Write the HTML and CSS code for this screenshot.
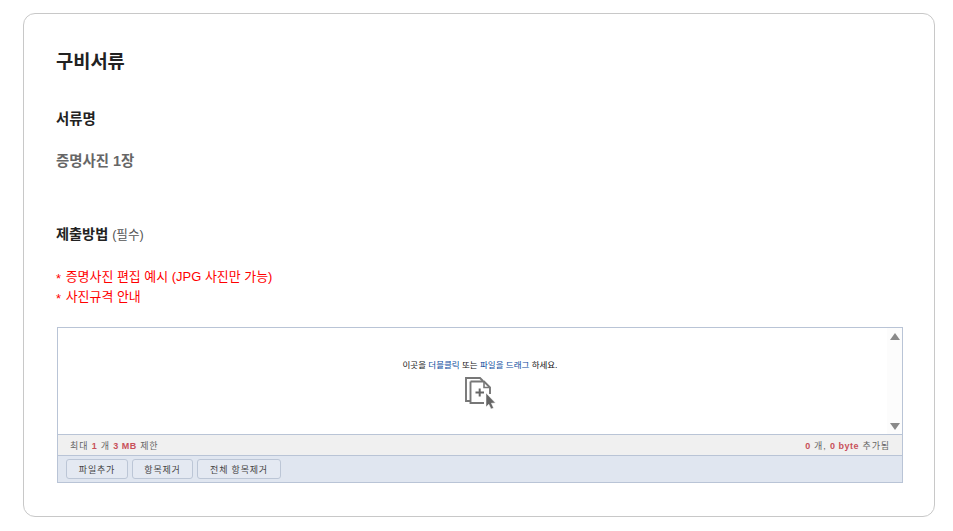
FILE: index.html
```html
<!DOCTYPE html>
<html lang="ko">
<head>
<meta charset="utf-8">
<title>구비서류</title>
<link rel="stylesheet" href="styles.css">
</head>
<body>
<section class="card">
  <h2 class="title">구비서류</h2>
  <h3 class="label label-name">서류명</h3>
  <p class="doc-name">증명사진 1장</p>
  <h3 class="label label-method">제출방법 <span class="req">(필수)</span></h3>
  <ul class="notes">
    <li><span class="star">*</span> 증명사진 편집 예시 (JPG 사진만 가능)</li>
    <li><span class="star">*</span> 사진규격 안내</li>
  </ul>
  <div class="uploader">
    <div class="drop">
      <div class="drop-center">
        <p class="hint">이곳을 <span class="blue">더블클릭</span> 또는 <span class="blue">파일을 드래그</span> 하세요.</p>
        <svg class="drop-icon" width="32" height="32" viewBox="0 0 32 32" aria-hidden="true">
          <path d="M5 24H1V1H15L18 4" fill="none" stroke="#777" stroke-width="1.9"/>
          <path d="M5.5 4.5H19L25 10.5V17M19 26H5.5V4.5" fill="#fff" stroke="#777" stroke-width="1.9"/>
          <path d="M19 4.5V10.5H25" fill="none" stroke="#777" stroke-width="1.6"/>
          <path d="M10.5 15.5H19M14.7 11.5V19.5" fill="none" stroke="#666" stroke-width="2"/>
          <path d="M21 16L30.5 26L26.4 26.2L28.6 31L26 32L23.8 27.2L21 30Z" fill="#666" stroke="#fff" stroke-width=".5"/>
        </svg>
      </div>
      <div class="scroll">
        <span class="arrow up"></span>
        <span class="arrow down"></span>
      </div>
    </div>
    <div class="status">
      <span>최대 <b>1</b> 개 <b>3 MB</b> 제한</span>
      <span><b>0</b> 개, <b>0 byte</b> 추가됨</span>
    </div>
    <div class="actions">
      <button type="button" class="btn btn-add">파일추가</button>
      <button type="button" class="btn btn-del">항목제거</button>
      <button type="button" class="btn btn-all">전체 항목제거</button>
    </div>
  </div>
</section>
</body>
</html>
```
FILE: styles.css
```css
* { box-sizing: border-box; }
html, body { margin: 0; padding: 0; background: #fff; }
body {
  font-family: "Liberation Sans", "Noto Sans CJK KR", sans-serif;
  color: #222;
  width: 953px;
  height: 531px;
  overflow: hidden;
}
.card {
  margin: 13px 18px 0 23px;
  height: 504px;
  border: 1px solid #c8c8c8;
  border-radius: 12px;
  padding: 34px 31px 0 32px;
}
.title { margin: 0; font-size: 18.72px; line-height: 28px; font-weight: 700; color: #222; }
.label { margin: 0; font-size: 14.4px; line-height: 20px; font-weight: 700; color: #222; }
.label-name { margin-top: 33px; }
.doc-name { margin: 22px 0 0; font-size: 14.4px; line-height: 20px; font-weight: 700; color: #666; }
.label-method { margin-top: 53px; font-size: 14.2px; }
.req { font-weight: 400; font-size: 12.6px; color: #555; }
.notes { list-style: none; margin: 22px 0 0; padding: 0; font-size: 12.96px; line-height: 20px; color: #f00; }
.notes li { height: 20px; }
.star { vertical-align: -2px; margin-right: 1px; }
.uploader {
  margin: 20px 0 0 1px;
  width: 846px;
  height: 156px;
  border: 1px solid #b9c4d6;
  display: flex;
  flex-direction: column;
}
.drop { flex: none; height: 106px; display: flex; background: #fff; }
.drop-center { flex: 1; display: flex; flex-direction: column; align-items: center; padding-top: 30px; padding-left: 15px; }
.hint { margin: 0; font-size: 8.5px; line-height: 14px; color: #111; }
.blue { color: #0a4a9c; }
.drop-icon { margin-top: 5px; margin-left: 2px; }
.scroll { flex: none; width: 15px; background: #fcfcfc; display: flex; flex-direction: column; justify-content: space-between; align-items: center; padding: 5px 0 4px; }
.arrow { width: 0; height: 0; border-left: 5px solid transparent; border-right: 5px solid transparent; }
.up { border-bottom: 7px solid #8a8a8a; }
.down { border-top: 7px solid #8a8a8a; }
.status {
  flex: none;
  height: 22px;
  background: #f0f0f0;
  border-top: 1px solid #b9c4d6;
  border-bottom: 1px solid #b9c4d6;
  display: flex;
  justify-content: space-between;
  align-items: center;
  padding: 0 12px 0 12px;
  font-size: 9px;
  letter-spacing: .9px;
  color: #666;
}
.status b { color: #c8505a; font-weight: 700; letter-spacing: .5px; }
.actions { flex: 1; background: #e0e6f0; display: flex; align-items: center; gap: 4px; padding: 0 8px; }
.btn {
  height: 20px;
  padding: 0;
  background: #e4e9f2;
  border: 1px solid #bcc6d6;
  border-radius: 3px;
  font-family: inherit;
  font-size: 9px;
  letter-spacing: .8px;
  color: #444;
}
.btn-add { width: 62px; }
.btn-del { width: 61px; }
.btn-all { width: 84px; }
```
